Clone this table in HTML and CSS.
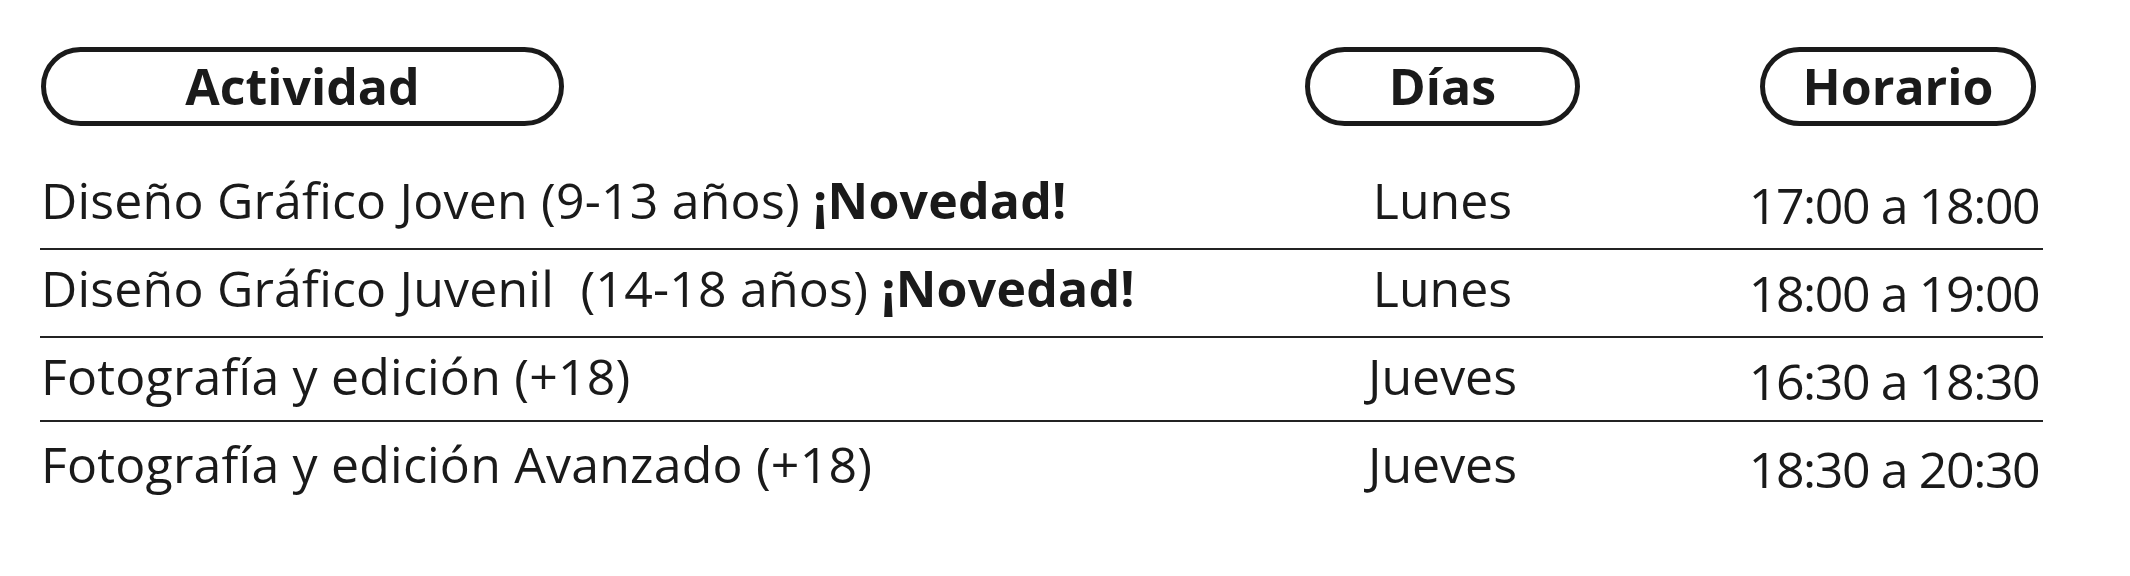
FILE: index.html
```html
<!DOCTYPE html>
<html lang="es">
<head>
<meta charset="utf-8">
<title>Horario de actividades</title>
<link rel="stylesheet" href="styles.css">
</head>
<body>
<div class="schedule">
  <div class="head">
    <div class="cell-activity"><span class="pill pill-activity">Actividad</span></div>
    <div class="cell-center"><span class="pill pill-days">Días</span></div>
    <div class="cell-center"><span class="pill pill-time">Horario</span></div>
  </div>
  <div class="row">
    <div class="activity">Diseño Gráfico Joven (9-13 años) <b>¡Novedad!</b></div>
    <div class="days">Lunes</div>
    <div class="time">17:00 a 18:00</div>
  </div>
  <div class="row">
    <div class="activity">Diseño Gráfico Juvenil&nbsp; (14-18 años) <b>¡Novedad!</b></div>
    <div class="days">Lunes</div>
    <div class="time">18:00 a 19:00</div>
  </div>
  <div class="row row-short">
    <div class="activity">Fotografía y edición (+18)</div>
    <div class="days">Jueves</div>
    <div class="time">16:30 a 18:30</div>
  </div>
  <div class="row row-last">
    <div class="activity">Fotografía y edición Avanzado (+18)</div>
    <div class="days">Jueves</div>
    <div class="time">18:30 a 20:30</div>
  </div>
</div>
</body>
</html>
```

FILE: styles.css
```css
html, body {
  margin: 0;
  padding: 0;
  background: #ffffff;
}

body {
  font-family: "Open Sans", "Noto Sans", sans-serif;
  color: #1a1a1a;
}

.schedule {
  width: 2003px;
  margin-left: 40px;
  padding-top: 47px;
}

.head,
.row {
  display: grid;
  grid-template-columns: 1085px 275px 276px;
  column-gap: 180px;
  padding-right: 7px;
}

.head {
  margin-bottom: 36px;
}

.cell-activity {
  display: flex;
  justify-content: flex-start;
  padding-left: 1px;
}

.cell-center {
  display: flex;
  justify-content: stretch;
}

.pill {
  box-sizing: border-box;
  display: block;
  height: 79px;
  border: 5px solid #1a1a1a;
  border-radius: 40px;
  font-weight: 700;
  font-size: 50px;
  line-height: 68px;
  text-align: center;
}

.pill-activity {
  width: 523px;
}

.pill-days,
.pill-time {
  width: 100%;
}

.row {
  padding-top: 8px;
  padding-bottom: 18px;
  border-bottom: 2px solid #232323;
  font-size: 50px;
  line-height: 60px;
}

.row-short {
  padding-bottom: 14px;
}

.row-short + .row {
  padding-top: 12px;
}

.row-last {
  border-bottom: none;
}

.activity {
  white-space: nowrap;
  padding-left: 1px;
  letter-spacing: 0.2px;
}

.activity b {
  font-weight: 700;
}

.days {
  text-align: center;
  white-space: nowrap;
}

.time {
  text-align: center;
  white-space: nowrap;
  letter-spacing: -1.4px;
  padding-top: 5px;
  margin-bottom: -5px;
  margin-left: -34px;
  margin-right: -26px;
}
```
